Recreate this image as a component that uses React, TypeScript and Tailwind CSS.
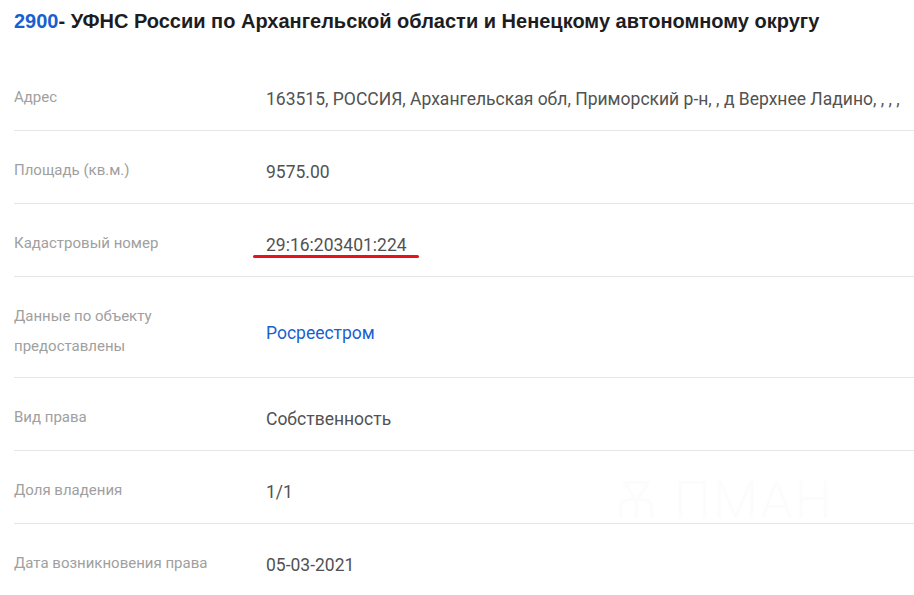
import React from 'react'

type Row = {
  label: React.ReactNode
  value: React.ReactNode
  tall?: boolean
}

const rows: Row[] = [
  {
    label: 'Адрес',
    value: '163515, РОССИЯ, Архангельская обл, Приморский р-н, , д Верхнее Ладино, , , ,',
  },
  { label: 'Площадь (кв.м.)', value: '9575.00' },
  {
    label: 'Кадастровый номер',
    value: (
      <span className="relative inline-block">
        29:16:203401:224
        {/* red marker stroke under the number */}
        <span className="absolute left-[-13px] right-[-12px] top-[25px] h-[3px] rounded-full bg-[#e3141b]" />
      </span>
    ),
  },
  {
    label: (
      <>
        Данные по объекту
        <br />
        предоставлены
      </>
    ),
    value: <a className="text-[#1a5fd0]">Росреестром</a>,
    tall: true,
  },
  { label: 'Вид права', value: 'Собственность' },
  { label: 'Доля владения', value: '1/1' },
  { label: 'Дата возникновения права', value: '05-03-2021' },
]

export default function App() {
  return (
    <div className="relative min-h-[595px] w-[914px] overflow-hidden bg-white pl-[14px] font-['Roboto',sans-serif]">
      <h1 className="h-[58px] pt-[8px] font-['Liberation_Sans',Arial,sans-serif] text-[20px] font-bold leading-[26px] text-[#1d1d1f]">
        <span className="text-[#1a5fd0]">2900</span>- УФНС России по Архангельской области и Ненецкому автономному округу
      </h1>

      <div>
        {rows.map((row, i) => (
          <div
            key={i}
            className={`flex items-center border-b border-[#e6e6e6] pt-[24px] ${row.tall ? 'pb-[16px]' : 'pb-[18px]'}`}
          >
            <div className="w-[252px] shrink-0 text-[15px] leading-[30px] text-[#a0a0a0]">{row.label}</div>
            <div className="translate-y-[2px] text-[17.5px] leading-[30px] text-[#525252]">{row.value}</div>
          </div>
        ))}
      </div>

      {/* faint watermark */}
      <div className="pointer-events-none absolute left-[615px] top-[462px] select-none font-['Roboto',sans-serif] text-[52px] font-light tracking-[2px] text-[#fcfcfc]">
        Ѫ ПМАН
      </div>
    </div>
  )
}
